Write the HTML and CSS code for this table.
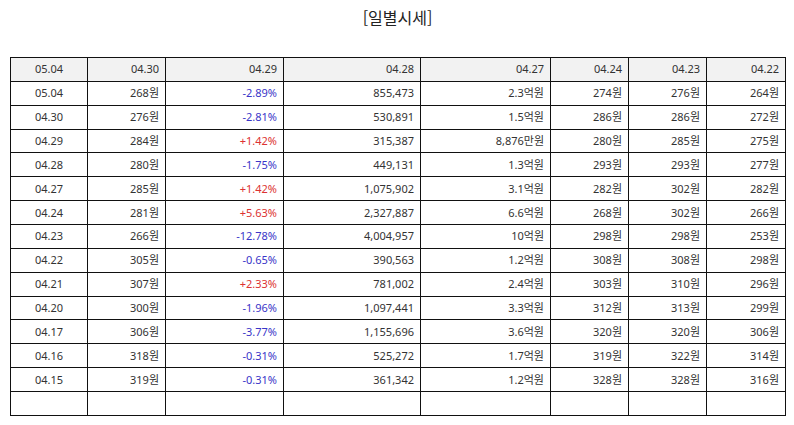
FILE: index.html
```html
<!DOCTYPE html>
<html lang="ko">
<head>
<meta charset="utf-8">
<link rel="stylesheet" href="styles.css">
</head>
<body>
<div class="page">
  <h1 class="title">[일별시세]</h1>
  <table class="grid">
    <colgroup>
      <col class="c1"><col class="c2"><col class="c3"><col class="c4"><col class="c5"><col class="c6"><col class="c7"><col class="c8">
    </colgroup>
    <thead>
      <tr><th class="center">05.04</th><th>04.30</th><th>04.29</th><th>04.28</th><th>04.27</th><th>04.24</th><th>04.23</th><th>04.22</th></tr>
    </thead>
    <tbody>
      <tr><td class="center">05.04</td><td>268원</td><td class="down">-2.89%</td><td>855,473</td><td>2.3억원</td><td>274원</td><td>276원</td><td>264원</td></tr>
      <tr><td class="center">04.30</td><td>276원</td><td class="down">-2.81%</td><td>530,891</td><td>1.5억원</td><td>286원</td><td>286원</td><td>272원</td></tr>
      <tr><td class="center">04.29</td><td>284원</td><td class="up">+1.42%</td><td>315,387</td><td>8,876만원</td><td>280원</td><td>285원</td><td>275원</td></tr>
      <tr><td class="center">04.28</td><td>280원</td><td class="down">-1.75%</td><td>449,131</td><td>1.3억원</td><td>293원</td><td>293원</td><td>277원</td></tr>
      <tr><td class="center">04.27</td><td>285원</td><td class="up">+1.42%</td><td>1,075,902</td><td>3.1억원</td><td>282원</td><td>302원</td><td>282원</td></tr>
      <tr><td class="center">04.24</td><td>281원</td><td class="up">+5.63%</td><td>2,327,887</td><td>6.6억원</td><td>268원</td><td>302원</td><td>266원</td></tr>
      <tr><td class="center">04.23</td><td>266원</td><td class="down">-12.78%</td><td>4,004,957</td><td>10억원</td><td>298원</td><td>298원</td><td>253원</td></tr>
      <tr><td class="center">04.22</td><td>305원</td><td class="down">-0.65%</td><td>390,563</td><td>1.2억원</td><td>308원</td><td>308원</td><td>298원</td></tr>
      <tr><td class="center">04.21</td><td>307원</td><td class="up">+2.33%</td><td>781,002</td><td>2.4억원</td><td>303원</td><td>310원</td><td>296원</td></tr>
      <tr><td class="center">04.20</td><td>300원</td><td class="down">-1.96%</td><td>1,097,441</td><td>3.3억원</td><td>312원</td><td>313원</td><td>299원</td></tr>
      <tr><td class="center">04.17</td><td>306원</td><td class="down">-3.77%</td><td>1,155,696</td><td>3.6억원</td><td>320원</td><td>320원</td><td>306원</td></tr>
      <tr><td class="center">04.16</td><td>318원</td><td class="down">-0.31%</td><td>525,272</td><td>1.7억원</td><td>319원</td><td>322원</td><td>314원</td></tr>
      <tr><td class="center">04.15</td><td>319원</td><td class="down">-0.31%</td><td>361,342</td><td>1.2억원</td><td>328원</td><td>328원</td><td>316원</td></tr>
      <tr><td></td><td></td><td></td><td></td><td></td><td></td><td></td><td></td></tr>
    </tbody>
  </table>
</div>
</body>
</html>
```
FILE: styles.css
```css
html, body {
  margin: 0;
  padding: 0;
  background: #ffffff;
}

.page {
  padding: 0 9px 0 10px;
  font-family: "Noto Sans", "Noto Sans CJK KR", sans-serif;
  color: #333333;
}

.title {
  margin: 0;
  height: 57px;
  padding-top: 4px;
  box-sizing: border-box;
  text-align: center;
  font-family: "Noto Sans CJK KR", "Noto Sans", sans-serif;
  font-size: 16px;
  font-weight: normal;
  line-height: 26px;
  color: #222222;
}

.grid {
  width: 775px;
  border-collapse: collapse;
  table-layout: fixed;
  font-size: 11px;
}

.c1 { width: 77px; }
.c2 { width: 78px; }
.c3 { width: 118px; }
.c4 { width: 137px; }
.c5 { width: 130px; }
.c6 { width: 78px; }
.c7 { width: 78px; }
.c8 { width: 79px; }

.grid th,
.grid td {
  border: 1px solid #111111;
  height: 22.87px;
  padding: 0 6px 0 4px;
  text-align: right;
  font-weight: normal;
  line-height: 14px;
  white-space: nowrap;
}

.grid th {
  background: #f2f2f2;
}

.grid .center {
  text-align: center;
  padding: 0 2px;
}

.grid .down { color: #3a35c8; }
.grid .up { color: #dc3232; }
```
